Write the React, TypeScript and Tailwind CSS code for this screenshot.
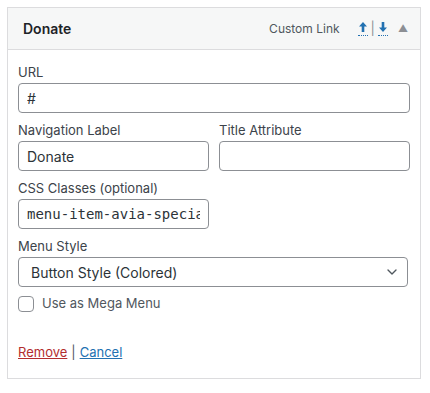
import { ChevronDown } from 'lucide-react'

const font = { fontFamily: 'Inter, "Liberation Sans", Arial, sans-serif' }

function Field({ label, children }: { label: string; children: React.ReactNode }) {
  return (
    <div className="flex flex-col">
      <label className="mb-[2px] text-[13px] leading-[18px] text-[#3c434a]">{label}</label>
      {children}
    </div>
  )
}

const inputCls =
  'h-[30px] w-full rounded-[4px] border border-[#8c8f94] bg-white px-2 text-[14px] text-[#2c3338] outline-none'

function Arrow({ down }: { down?: boolean }) {
  return (
    <span className="flex h-[15px] items-start border-b border-dotted border-[#2271b1]">
      <svg width="10" height="12" viewBox="0 0 10 12" className={down ? 'rotate-180' : ''}>
        <path d="M5 1 L9 5.5 H6.3 V11 H3.7 V5.5 H1 Z" fill="#2271b1" />
      </svg>
    </span>
  )
}

export default function App() {
  return (
    <div className="min-h-screen bg-white pt-[7px] pl-[7px]" style={font}>
      <div className="w-[414px]">
        {/* handle */}
        <div className="relative flex h-[43px] items-center border border-[#dcdcde] bg-[#f6f7f7] pr-[12px] pl-[15px]">
          <span className="text-[14px] font-semibold text-[#1d2327]">Donate</span>
          <span className="ml-auto text-[12px] text-[#50575e]">Custom Link</span>
          <span className="ml-[18px] flex items-center">
            <Arrow />
            <span className="mx-[3px] text-[13px] text-[#8c8f94]">|</span>
            <Arrow down />
          </span>
          <span className="ml-[10px] text-[10px] text-[#8c8f94]">▲</span>
          <div className="absolute top-[41px] right-[10px] h-[4px] overflow-hidden">
            <span className="block text-[13px] leading-[14px] text-[#8c8f94]">Edit</span>
          </div>
        </div>

        {/* settings */}
        <div className="relative border border-t-0 border-[#dcdcde] bg-white px-[10px] pt-[13px] pb-[17px]">
          <div className="flex flex-col gap-[8px]">
            <Field label="URL">
              <input className={inputCls} defaultValue="#" />
            </Field>
            <div className="grid grid-cols-2 gap-[10px]">
              <Field label="Navigation Label">
                <input className={inputCls} defaultValue="Donate" />
              </Field>
              <Field label="Title Attribute">
                <input className={inputCls} defaultValue="" />
              </Field>
            </div>
            <div className="w-[191px]">
              <Field label="CSS Classes (optional)">
                <input
                  className={inputCls}
                  style={{ fontFamily: '"DejaVu Sans Mono", "Liberation Mono", monospace', fontSize: 14 }}
                  defaultValue="menu-item-avia-special"
                />
              </Field>
            </div>
            <div className="w-[390px]">
              <Field label="Menu Style">
                <div className="flex h-[30px] items-center rounded-[4px] border border-[#8c8f94] bg-white pr-[7px] pl-[12px] text-[14px] text-[#2c3338]">
                  <span>Button Style (Colored)</span>
                  <ChevronDown className="ml-auto h-[16px] w-[16px] text-[#50575e]" strokeWidth={2} />
                </div>
              </Field>
            </div>
          </div>

          <div className="mt-[7px] flex items-center">
            <span className="h-[16px] w-[16px] rounded-[4px] border border-[#8c8f94] bg-white" />
            <span className="ml-[8px] text-[13px] text-[#50575e]">Use as Mega Menu</span>
          </div>

          <div className="mt-[29px] flex items-center text-[13px] leading-[18px]">
            <a className="text-[#b32d2e] underline">Remove</a>
            <span className="mx-[4px] text-[#50575e]">|</span>
            <a className="text-[#2271b1] underline">Cancel</a>
          </div>
        </div>
      </div>
    </div>
  )
}
